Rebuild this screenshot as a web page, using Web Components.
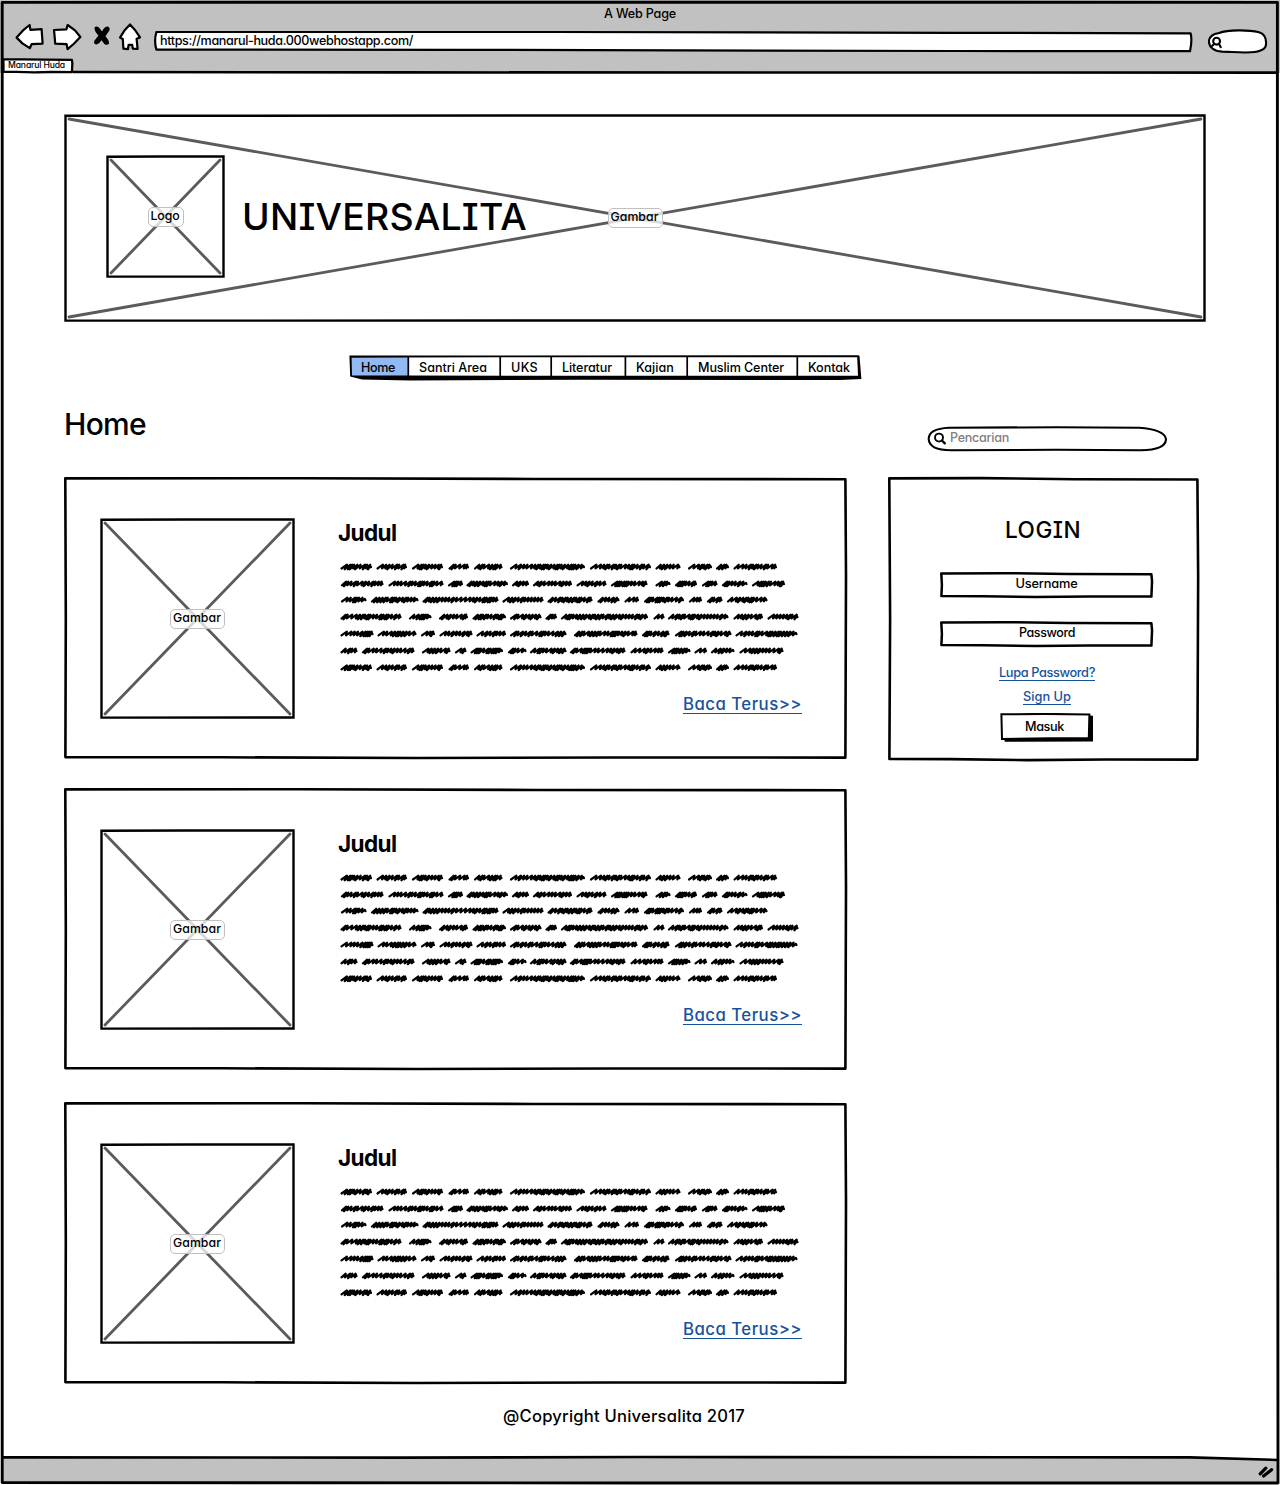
<!DOCTYPE html>
<html lang="id">
<head>
<meta charset="utf-8">
<title>A Web Page</title>
<style>
html,body{margin:0;padding:0;background:#fff}
body{width:1280px;height:1485px;overflow:hidden;color:#000;font-family:Inter,"Open Sans","Liberation Sans",sans-serif;font-feature-settings:"cv11","cv08"}
</style>
</head>
<body>
<wf-page></wf-page>
<script>
class Base extends HTMLElement{
  connectedCallback(){
    if(this.shadowRoot)return;
    this.attachShadow({mode:'open'}).innerHTML=this.render();
    if(this.ready)this.ready();
  }
  num(n,d=0){return this.hasAttribute(n)?parseFloat(this.getAttribute(n)):d}
}

/* One line of lettering, spaced to the width given in w. */
customElements.define('fit-text',class extends Base{
  render(){
    const w=this.num('w'),s=this.num('size',12.8),h=this.num('h',Math.round(s*1.3)),b=this.getAttribute('weight')||460;
    return `<style>:host{display:block;flex:none;width:${w}px;height:${h}px;line-height:${h}px;font-size:${s}px;font-weight:${b};white-space:nowrap}
    span{display:inline-block;transform-origin:0 50%}</style><span><slot></slot></span>`;
  }
  ready(){
    const w=this.num('w'),n=this.textContent.length,sp=this.shadowRoot.querySelector('span');
    const nat=sp.getBoundingClientRect().width,lim=this.num('size',12.8)*.03;
    const ls=(w-nat)/n;
    if(ls<-lim){
      sp.style.letterSpacing=-lim+'px';
      sp.style.transform=`scaleX(${w/(nat-lim*n)})`;
    }else sp.style.letterSpacing=ls+'px';
  }
});

/* Box with a hand-drawn outline. */
customElements.define('sketch-box',class extends Base{
  render(){
    const w=this.num('w'),h=this.num('h'),k=this.num('stroke',2.6),j=this.num('wobble',.6);
    const d=`M1.3 1.4 L${w*.3} ${1.4-j/3} L${w*.6} ${1.4+j} L${w-1.6} ${1.6+j} L${w-1.3+j/2} ${h*.35} L${w-1.6} ${h-1.4} L${w*.7} ${h-1.5} L${w*.45} ${h-1.2+j/3} L${w*.2} ${h-1.4-j/2} L1.4 ${h-1.6-j/2} L${1.2+j} ${h*.5}Z`;
    return `<style>:host{display:grid;flex:none;box-sizing:border-box;width:${w}px;height:${h}px}
    :host>*,svg,div{grid-area:1/1}svg{display:block;overflow:visible}
    div{display:flex;min-width:0}
    :host([center]) div{align-items:flex-start;justify-content:center}</style>
    <svg width="${w}" height="${h}"><path d="${d}" fill="#fff" stroke="#000" stroke-width="${k}" stroke-linejoin="round"/></svg><div><slot></slot></div>`;
  }
});

/* Image placeholder: outline, crossed diagonals, label. */
customElements.define('image-box',class extends Base{
  render(){
    const w=this.num('w'),h=this.num('h'),lw=this.num('lw',48);
    return `<style>:host{display:grid;flex:none;width:${w}px;height:${h}px}
    svg,.l,.c{grid-area:1/1}svg{display:block;overflow:visible}
    .l{place-self:center;box-sizing:border-box;width:${lw+7}px;height:20px;border:1px solid #c0c0c0;border-radius:5px;background:rgba(255,255,255,.76);padding:0 0 0 2px}
    .c{display:flex;align-items:flex-start}</style>
    <svg width="${w}" height="${h}" fill="none"><path d="M1.5 1.8 L${w*.45} 1.5 L${w-1.5} 1.4 V${h-1.5} L1.5 ${h-1.4}Z" fill="#fff" stroke="#000" stroke-width="2.4"/>
    <path d="M5 5L${w-5} ${h-5}M${w-5} 5L5 ${h-5}" stroke="#5b5b5b" stroke-width="2.8" stroke-linecap="round"/></svg>
    <div class="l"><fit-text w="${lw}" size="12.3" h="16" weight="500">${this.getAttribute('label')}</fit-text></div><div class="c"><slot></slot></div>`;
  }
});

/* Scribbled paragraph: seven rows of word spans, in px from the column's left edge. */
const ROWS=[
 [2.5,34,38.5,69,74,105,110.5,131,136,164.5,172,247,252,313,317.5,342.5,350,374,378,391,395.5,439],
 [3,45.5,50.5,105.5,110,125,128.5,170,174,191,195,234,238.5,268.5,273,309.5,317.5,332.5,337,359,364,379.5,384,409.5,414,447],
 [3,28.5,33,80.5,84.5,160.5,164.5,205.5,209.5,254.5,259.5,281.5,286.5,301,306,346,351,364,369,384.5,389,429.5],
 [2.5,63.5,71,93.5,101,130,134.5,168,172,203.5,207.5,219,223,310,315.5,326.5,330,390.5,395.5,425,429.5,460.5],
 [2.5,35.5,39.5,78.5,83,97,101.5,134.5,138.5,168,172,228.5,236,299.5,304,331.5,337,393.5,397.5,459.5],
 [2.5,19.5,24,76.5,84,112.5,117,128.5,132.5,165,170,188.5,192,228.5,232,287.5,292.5,325.5,330,352.5,356.5,369,373,396.5,401.5,445.5]];
ROWS.push(ROWS[0]);
const ROW_Y=[8.8,25.7,41.8,58.8,75.7,92.7,109.6];
customElements.define('scribble-text',class extends Base{
  render(){
    let seed=11,d='';
    const rnd=()=>(seed=(seed*16807)%2147483647)/2147483647;
    const p=(x,y)=>x.toFixed(1)+' '+y.toFixed(1);
    ROWS.forEach((row,r)=>{
      if(r===6)seed=11;
      const y=ROW_Y[r];
      for(let i=0;i<row.length;i+=2){
        const a=row[i]+1,b=row[i+1]-1;
        let x=a;
        d+='M'+p(a,y+1.7);
        while(x<b-4){
          const wide=rnd()<.45,low=rnd()<.45;
          const top=Math.min(x+(wide?5.4:4.2),b-.8);
          const bx=Math.max(a,top-(low?2.2:.9));
          d+='L'+p(top,y-2.1)+'L'+p(bx,y+(low?2.5:1.6));
          x=Math.max(bx,x+1.8);
        }
        d+='L'+p(b-.6,y-.9)+'L'+p(b,y+.4);
      }
    });
    return `<style>:host{display:block}svg{display:block}</style><svg width="470" height="118"><path d="${d}" fill="none" stroke="#000" stroke-width="2.15" stroke-linecap="round" stroke-linejoin="round"/></svg>`;
  }
});

customElements.define('text-link',class extends Base{
  render(){
    return `<style>:host{display:block;flex:none;width:${this.num('w')}px;color:#17529c;border-bottom:1.4px solid #17529c}</style><fit-text w="${this.num('w')}" size="${this.num('size',12.8)}" h="${this.num('h',15)}">${this.textContent}</fit-text>`;
  }
});

customElements.define('search-pill',class extends Base{
  render(){
    const big=this.hasAttribute('placeholder'),w=big?240:60,h=big?26:25;
    const d=big?'M22 1.8 L130 1.2 L212 1.8 C228 3 238 7 239 13 C239 20 230 24 214 24.2 L130 23.8 L24 24.2 C9 24.2 2 20 1.7 13 C1.6 6 10 2.4 22 1.8Z'
      :'M11 4 C20 .6 40 .6 51 3.2 C57 5 58.4 10 58 15 C58 20 52 22.8 43 23.3 C32 24 22 22.6 14 22.6 C6 22.4 1 18 .9 12.5 C1 7.5 5 5 11 4Z';
    return `<style>:host{display:grid;flex:none;width:${w}px;height:${h}px;color:#808080}svg,div{grid-area:1/1}svg{display:block}div{padding-left:23px}</style>
    <svg width="${w}" height="${h}"><path d="${d}" fill="#fff" stroke="#000" stroke-width="2.1"/>
    <g fill="none" stroke="#000" stroke-linecap="round">${big?'<circle cx="12" cy="11.6" r="4" stroke-width="1.9"/><path d="M15.2 14.8L17.8 17.4" stroke-width="2.3"/>':'<circle cx="8.6" cy="12.2" r="3.4" stroke-width="2.1"/><path d="M11 15L12.8 18.2M4 17L5.6 15.4" stroke-width="2.1"/>'}</g></svg>
    ${big?`<div><fit-text w="59" size="12.6" h="23">${this.getAttribute('placeholder')}</fit-text></div>`:''}`;
  }
});

customElements.define('menu-bar',class extends Base{
  render(){
    const it=[['Home',58,34],['Santri Area',92,68],['UKS',51,27],['Literatur',74,50],['Kajian',62,38],['Muslim Center',110,86],['Kontak',63,42]];
    return `<style>:host{display:grid;width:512px;height:26px}svg,nav{grid-area:1/1}svg{display:block;overflow:visible}
    nav{display:flex}div{box-sizing:border-box;padding-left:11px}</style>
    <svg width="512" height="26"><path d="M-.6 .6L508.5 .2L509.5 .9L511.4 24L490 25L230 24.8L60 25.4L12 24.6L.2 21.6Z"/><path d="M1.6 2.8L58 2.4V20.4L2 20.6Z" fill="#92b9f1"/><path d="M59 2.4L507.2 2.2L508 20.8L59 20.6Z" fill="#fff"/>
    <path d="M58.3 2V22M150.2 2V22M201.2 2V22M275.4 2V22M337.2 2V22M447.3 2V24" stroke="#000" stroke-width="1.7"/></svg>
    <nav>${it.map(i=>`<div style="width:${i[1]}px"><fit-text w="${i[2]}" h="25" size="12.6">${i[0]}</fit-text></div>`).join('')}</nav>`;
  }
});

customElements.define('push-button',class extends Base{
  render(){
    return `<style>:host{display:grid;width:94px;height:30px}svg,div{grid-area:1/1}svg{display:block}div{padding-left:25px}</style>
    <svg width="94" height="30"><path d="M4.5 25L4.6 28.8L93 28.6V2.8L88 2.6V25Z"/><path d="M1.4 1.3L45 .9L89.4 1.4L88.8 25L50 25.2L2 26Z" fill="#fff" stroke="#000" stroke-width="2"/></svg>
    <div><fit-text w="39" h="28">${this.textContent}</fit-text></div>`;
  }
});

customElements.define('article-card',class extends Base{
  render(){
    return `<style>:host{display:block}.c{display:flex;flex-direction:column}image-box{margin:41px 43px 0 36px}.h{margin-top:41px}scribble-text{margin:10px 0 19px}text-link{margin-left:345px}</style>
    <sketch-box w="783" h="282"><image-box w="195" h="201" label="Gambar"></image-box>
    <div class="c"><fit-text class="h" w="58.5" size="22.5" h="30" weight="650">Judul</fit-text><scribble-text></scribble-text><text-link w="119" size="16.8" h="18">Baca Terus&gt;&gt;</text-link></div></sketch-box>`;
  }
});

customElements.define('login-panel',class extends Base{
  render(){
    return `<style>:host{display:block}.c{display:flex;flex-direction:column}
    .t{margin:38px 0 27px 117px}.i{margin:0 0 23px 52px}.j{margin:0 0 18px 52px}.a{margin:0 0 8px 111px}.b{margin:0 0 8px 135px}push-button{margin-left:112px}</style>
    <sketch-box w="311" h="284" wobble=".9"><div class="c"><fit-text class="t" w="76" size="22.6" h="30">LOGIN</fit-text>
    <sketch-box class="i" center w="213" h="26" wobble=".7" stroke="2.5"><fit-text w="62" h="23">Username</fit-text></sketch-box>
    <sketch-box class="j" center w="213" h="26" wobble=".7" stroke="2.5"><fit-text w="56" h="23">Password</fit-text></sketch-box>
    <text-link class="a" w="96">Lupa Password?</text-link><text-link class="b" w="48">Sign Up</text-link>
    <push-button>Masuk</push-button></div></sketch-box>`;
  }
});

customElements.define('browser-chrome',class extends Base{
  render(){
    const g='fill="#fff" stroke="#000" stroke-width="2.2" stroke-linejoin="round"';
    return `<style>:host{display:block;height:73px;background:#c1c1c1;overflow:visible}
    .t{display:flex;height:22px;padding:0 0 0 604px}
    .r{display:flex;height:36px;align-items:flex-start}.r svg{display:block;flex:none}
    .u{margin:8px 15px 0 11px;display:grid;width:1039px;height:22px}.u>*{grid-area:1/1}.u fit-text{margin-left:6px}
    search-pill{margin-top:7px}.tab{margin-left:2px}.tab fit-text{margin-left:6px}</style>
    <div class="t"><fit-text w="72" h="27" size="12.6">A Web Page</fit-text></div>
    <div class="r">
    <svg style="margin-left:14px" width="32" height="32"><path ${g} d="M2.6 15.6L9 8.4L15.6 3L16.4 7.8L27.6 7.2L28.6 21.6L17.6 22.2L15.8 26.2L8.4 21.4Z"/></svg>
    <svg style="margin-left:5px" width="34" height="32"><path ${g} d="M3 8L15.4 7.4L16.6 3L24 8.4L29.4 15L22.6 22L16.6 27.2L15.6 22.2L4.2 21.6L3.6 14Z"/></svg>
    <svg style="margin-left:7px" width="20" height="32"><path d="M2.6 5.2Q4.6 3.4 7 5.6L10 9.4Q12.4 4.8 15.6 4.6Q18.4 5.4 17.4 8.6L13.4 14.2Q17.4 18.4 17 21.4Q15.4 24 12.4 22L9.4 18.2Q7.4 21.8 4.6 22.6Q1.4 22.4 2.2 19L6.4 13.6Q2 9 2.6 5.2Z"/></svg>
    <svg style="margin-left:5px" width="26" height="32"><path ${g} d="M13 2.4L18 8L23 15.4L19.6 16.8L20.6 27L15.8 26.6L15.2 22.8L11.6 22.8L11 27.2L6.4 26.6L5.8 17L3 15.6L7.4 8.6Z"/></svg>
    <div class="u"><svg style="overflow:visible" width="1039" height="22"><path d="M2.4 2L400 2L800 2.8L1036.6 3.4Q1038.4 10 1036 21.2L800 21L300 19.8L2.4 19.6Q-.2 11 2.4 2Z" ${g}/></svg><fit-text w="253" h="21" size="12.6">https://manarul-huda.000webhostapp.com/</fit-text></div>
    <search-pill></search-pill></div>
    <sketch-box class="tab" w="71.5" h="15.5" wobble=".3" stroke="2.3"><fit-text w="57" h="15" size="8.6">Manarul Huda</fit-text></sketch-box>`;
  }
});

customElements.define('wf-page',class extends Base{
  render(){
    return `<style>:host{display:flex;flex-direction:column;position:relative;width:1280px;height:1485px}
    main{flex:1;padding:41px 0 0 64px}
    .logo{margin:41px 17px 0 42px}.title{margin-top:80px}
    menu-bar{margin:33px 0 23px 286px}
    .head{display:flex;height:73px}.head fit-text{margin:0 782px 0 0}.head search-pill{margin:22px 0 0 -1px}
    .cols{display:flex;gap:41px}.cards{display:flex;flex-direction:column}.cards>*+*{margin-top:29px}.cards>:last-child{margin-top:32px}
    .copy{margin:20px 0 0 439px}
    footer svg{display:block}
    .frame{position:absolute;inset:0;pointer-events:none}</style>
    <browser-chrome></browser-chrome>
    <main>
      <image-box w="1142" h="208" label="Gambar"><image-box class="logo" w="119" h="123" lw="29" label="Logo"></image-box><fit-text class="title" w="285" size="37.4" h="46">UNIVERSALITA</fit-text></image-box>
      <menu-bar></menu-bar>
      <div class="head"><fit-text w="82" size="30" h="40">Home</fit-text><search-pill placeholder="Pencarian"></search-pill></div>
      <div class="cols"><div class="cards"><article-card></article-card><article-card></article-card><article-card></article-card></div><login-panel></login-panel></div>
      <fit-text class="copy" w="242" size="16.6" h="24">@Copyright Universalita 2017</fit-text>
    </main>
    <footer><svg width="1280" height="30"><path d="M2 2.4L640 2L1190 2.4L1278 5V28H2Z" fill="#c1c1c1"/><path d="M2 2.4L400 2.6L640 2L1190 2.4L1278 5" fill="none" stroke="#000" stroke-width="2.6"/><path d="M1260.2 18.8L1265.8 13.2M1263.6 21L1271.6 14.8" fill="none" stroke="#000" stroke-width="3.2" stroke-linecap="round"/></svg></footer>
    <svg class="frame" width="1280" height="1485" fill="none" stroke="#000"><path d="M2.2 2.4L640 2.2L1277.4 2.4L1277.4 700L1278 1483L640 1483L2.2 1482.6L2.2 700Z" stroke-width="2.9" stroke-linejoin="round"/><path d="M73 72L400 72.4L1277 72.6" stroke-width="2.6"/></svg>`;
  }
});
</script>
</body>
</html>
